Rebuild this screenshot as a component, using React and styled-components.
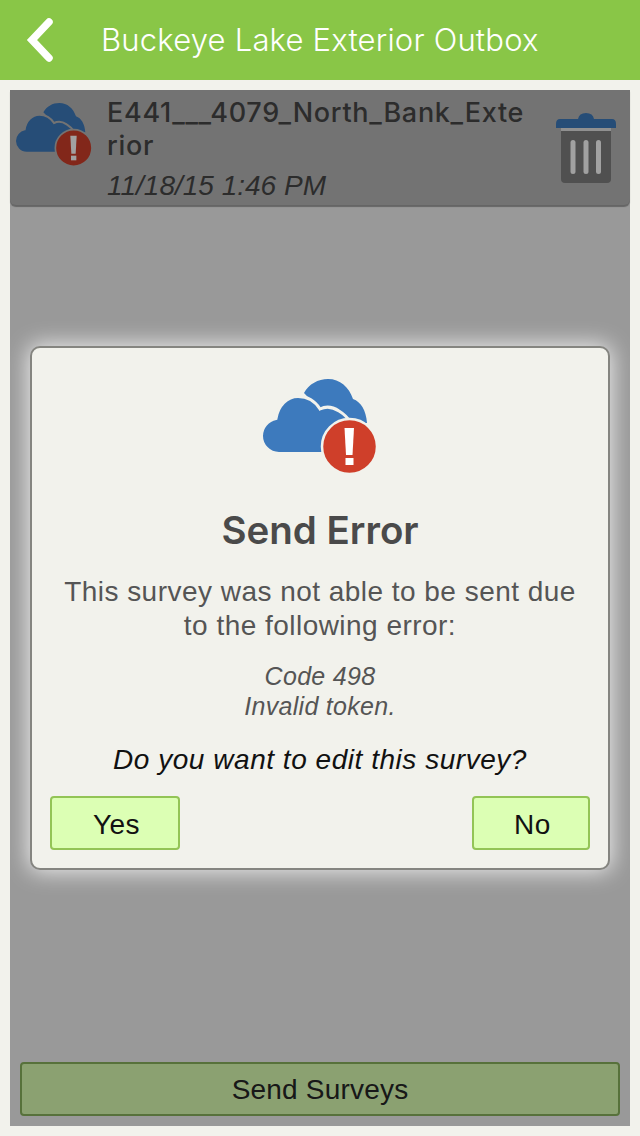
import React from 'react';
import styled, { createGlobalStyle } from 'styled-components';

const GlobalStyle = createGlobalStyle`
  html, body {
    margin: 0;
    padding: 0;
    background-color: #f2f2ec;
  }
  * {
    box-sizing: border-box;
  }
`;
const Page = styled.div`
  display: flex;
  flex-direction: column;
  height: 1136px;
  font-family: 'Liberation Sans', sans-serif;
  background-color: #f2f2ec;
`;
const Header = styled.header`
  display: flex;
  align-items: center;
  flex: none;
  height: 80px;
  padding-left: 26px;
  background-color: #89c647;
`;
const Title = styled.h1`
  margin: 0 0 2px 47px;
  font-family: Inter, sans-serif;
  font-size: 31px;
  font-weight: 300;
  letter-spacing: 0.2px;
  color: white;
`;
const Panel = styled.main`
  position: relative;
  display: flex;
  flex: 1;
  flex-direction: column;
  justify-content: space-between;
  margin: 10px;
  background-color: #f2f2f2;
`;
const Row = styled.div`
  display: flex;
  height: 115px;
  padding: 6px 14px 0 6px;
  border-radius: 0 0 6px 6px;
  background-color: #b7b7b7;
  box-shadow: 0 2px 1px #a0a0a0;
`;
const RowIcon = styled.div`
  flex: none;
  width: 76px;
  margin-top: 7px;
`;
const RowText = styled.div`
  width: 425px;
  margin-left: 15px;
  color: #474747;
`;
const RowName = styled.div`
  font-family: Inter, sans-serif;
  font-size: 27px;
  font-weight: 500;
  line-height: 33px;
  letter-spacing: 0.7px;
  word-break: break-all;
`;
const RowDate = styled.div`
  margin-top: 8px;
  font-size: 28px;
  font-style: italic;
  line-height: 32px;
`;
const RowTrash = styled.div`
  flex: none;
  margin: 17px 0 0 auto;
`;
const SendButton = styled.button`
  height: 54px;
  margin: 0 10px 10px;
  padding-top: 3px;
  border: 2px solid #8ab35e;
  border-radius: 4px;
  font-family: inherit;
  font-size: 28px;
  letter-spacing: 0.2px;
  color: #262626;
  background-color: #dcffb4;
`;
const Overlay = styled.div`
  position: absolute;
  inset: 0;
  display: flex;
  align-items: center;
  justify-content: center;
  background-color: rgba(0, 0, 0, 0.37);
`;
const Dialog = styled.section`
  display: flex;
  flex-direction: column;
  align-items: center;
  width: 580px;
  height: 524px;
  padding: 31px 18px 0;
  border: 2px solid #858580;
  border-radius: 10px;
  background-color: #f2f2ec;
  box-shadow: 0 0 22px 2px rgba(255, 255, 255, 0.8);
`;
const DialogTitle = styled.h2`
  margin: 34px 0 0;
  font-family: Inter, sans-serif;
  font-size: 38.500px;
  font-weight: 600;
  line-height: 44px;
  color: #4a4a4a;
`;
const Message = styled.p`
  margin: 23px 0 0;
  font-size: 28px;
  letter-spacing: 0.47px;
  line-height: 34px;
  text-align: center;
  color: #555;
`;
const Detail = styled.p`
  margin: 18px 0 0;
  font-size: 25px;
  font-style: italic;
  letter-spacing: 0.3px;
  line-height: 30px;
  text-align: center;
  color: #555;
`;
const Question = styled.p`
  margin: 22px 0 0;
  font-size: 28px;
  font-style: italic;
  letter-spacing: 0.53px;
  line-height: 34px;
  color: #111;
`;
const Actions = styled.div`
  display: flex;
  justify-content: space-between;
  align-self: stretch;
  margin-top: 19px;
`;
const ActionButton = styled.button`
  width: ${(props) => props.width}px;
  height: 54px;
  padding: 3px 0 0 3px;
  border: 2px solid #93c456;
  border-radius: 4px;
  font-family: inherit;
  font-size: 28px;
  letter-spacing: 0.5px;
  color: #111;
  background-color: #dcffb4;
`;

const BackIcon = () => (
  <svg width="28" height="44" viewBox="0 0 28 44" fill="none">
    <path d="M23 4 L6 22 L23 40" stroke="white" strokeWidth="7.5" strokeLinecap="round" strokeLinejoin="miter" />
  </svg>
);

const CloudAlert = ({ width, halo }) => (
  <svg width={width} viewBox="0 0 114 95" style={{ display: 'block', overflow: 'visible' }}>
    <path
      fill="#3d7abd"
      d="M41 14 C46 5 55 0 65 0 C77 0 86 8 90 20 C98 23 103 31 104 44 L70 44 Z"
    />
    <path
      fill="#3d7abd"
      stroke={halo}
      strokeWidth="3"
      d="M16 74.500 C6 74.500 -1.500 66 -1.500 57 C-1.500 48 5 41 13 39.500 C15 27 24 17.500 35 17.500 C45 17.500 52 22 57 30 C63 27 70 28 76 32 C81 35 85 39 88 44 L70 74.500 Z"
    />
    <circle cx="86.500" cy="67.500" r="27.500" fill="#cf3f2a" stroke={halo} strokeWidth="2.500" />
    <path fill="white" d="M81.500 49 H91 L89.500 76 H83 Z" />
    <rect x="82.500" y="79" width="8" height="7" fill="white" />
  </svg>
);

const TrashIcon = () => (
  <svg width="60" height="70" viewBox="0 0 60 70" style={{ display: 'block' }}>
    <path fill="#3d7abd" d="M22 6 Q23 0 30 0 Q37 0 38 6 H56 Q60 6 60 11 V15 H0 V11 Q0 6 4 6 Z" />
    <rect x="5" y="15" width="50" height="3" fill="#e4e4e4" />
    <path fill="#7f7f7f" d="M5 18 H55 V66 Q55 70 51 70 H9 Q5 70 5 66 Z" />
    <rect x="14.500" y="27" width="5" height="34" rx="2.500" fill="white" />
    <rect x="27.500" y="27" width="5" height="34" rx="2.500" fill="white" />
    <rect x="40" y="27" width="5" height="34" rx="2.500" fill="white" />
  </svg>
);

const App = () => {
  return (
    <Page>
      <GlobalStyle />
      <Header>
        <BackIcon />
        <Title>Buckeye Lake Exterior Outbox</Title>
      </Header>
      <Panel>
        <Row>
          <RowIcon>
            <CloudAlert width={76} halo="#b7b7b7" />
          </RowIcon>
          <RowText>
            <RowName>E441___4079_North_Bank_Exterior</RowName>
            <RowDate>11/18/15 1:46 PM</RowDate>
          </RowText>
          <RowTrash>
            <TrashIcon />
          </RowTrash>
        </Row>
        <SendButton>Send Surveys</SendButton>
        <Overlay>
          <Dialog>
            <CloudAlert width={114} halo="#f2f2ec" />
            <DialogTitle>Send Error</DialogTitle>
            <Message>
              This survey was not able to be sent due
              <br />
              to the following error:
            </Message>
            <Detail>
              Code 498
              <br />
              Invalid token.
            </Detail>
            <Question>Do you want to edit this survey?</Question>
            <Actions>
              <ActionButton width={130}>Yes</ActionButton>
              <ActionButton width={118}>No</ActionButton>
            </Actions>
          </Dialog>
        </Overlay>
      </Panel>
    </Page>
  );
};

export default App;
